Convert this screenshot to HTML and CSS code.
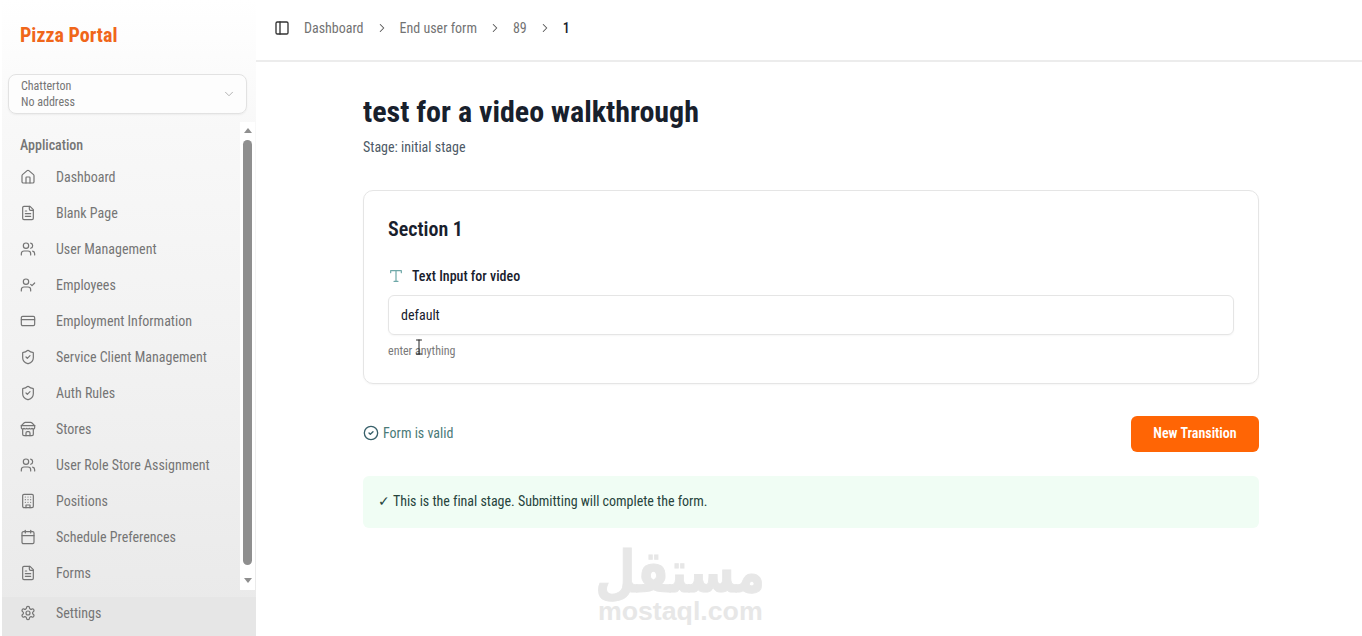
FILE: index.html
```html
<!DOCTYPE html>
<html lang="en">
<head>
  <meta charset="UTF-8" />
  <meta name="viewport" content="width=device-width, initial-scale=1.0" />
  <title>Pizza Portal</title>
  <link rel="stylesheet" href="styles.css">
</head>
<body>
  <svg class="sprites" width="0" height="0" aria-hidden="true">
    <symbol id="i-house" viewBox="0 0 24 24"><path d="M15 21v-8a1 1 0 0 0-1-1h-4a1 1 0 0 0-1 1v8"/><path d="M3 10a2 2 0 0 1 .709-1.528l7-5.999a2 2 0 0 1 2.582 0l7 5.999A2 2 0 0 1 21 10v9a2 2 0 0 1-2 2H5a2 2 0 0 1-2-2z"/></symbol>
    <symbol id="i-file" viewBox="0 0 24 24"><path d="M15 2H6a2 2 0 0 0-2 2v16a2 2 0 0 0 2 2h12a2 2 0 0 0 2-2V7Z"/><path d="M14 2v4a2 2 0 0 0 2 2h4"/><path d="M10 9H8"/><path d="M16 13H8"/><path d="M16 17H8"/></symbol>
    <symbol id="i-users" viewBox="0 0 24 24"><path d="M16 21v-2a4 4 0 0 0-4-4H6a4 4 0 0 0-4 4v2"/><circle cx="9" cy="7" r="4"/><path d="M22 21v-2a4 4 0 0 0-3-3.87"/><path d="M16 3.13a4 4 0 0 1 0 7.75"/></symbol>
    <symbol id="i-user-check" viewBox="0 0 24 24"><path d="M16 21v-2a4 4 0 0 0-4-4H6a4 4 0 0 0-4 4v2"/><circle cx="9" cy="7" r="4"/><path d="m16 11 2 2 4-4"/></symbol>
    <symbol id="i-card" viewBox="0 0 24 24"><rect x="2" y="5" width="20" height="14" rx="2"/><path d="M2 10h20"/></symbol>
    <symbol id="i-shield" viewBox="0 0 24 24"><path d="M20 13c0 5-3.5 7.500-7.660 8.950a1 1 0 0 1-.670-.010C7.500 20.500 4 18 4 13V6a1 1 0 0 1 1-1c2 0 4.500-1.200 6.240-2.720a1.170 1.170 0 0 1 1.520 0C14.510 3.810 17 5 19 5a1 1 0 0 1 1 1z"/><path d="m9 12 2 2 4-4"/></symbol>
    <symbol id="i-store" viewBox="0 0 24 24"><path d="m2 7 4.410-4.410A2 2 0 0 1 7.830 2h8.340a2 2 0 0 1 1.420.590L22 7"/><path d="M4 12v8a2 2 0 0 0 2 2h12a2 2 0 0 0 2-2v-8"/><path d="M15 22v-4a2 2 0 0 0-2-2h-2a2 2 0 0 0-2 2v4"/><path d="M2 7h20"/><path d="M22 7v3a2 2 0 0 1-2 2a2.700 2.700 0 0 1-1.590-.630.700.700 0 0 0-.820 0A2.700 2.700 0 0 1 16 12a2.700 2.700 0 0 1-1.590-.630.700.700 0 0 0-.820 0A2.700 2.700 0 0 1 12 12a2.700 2.700 0 0 1-1.590-.630.700.700 0 0 0-.820 0A2.700 2.700 0 0 1 8 12a2.700 2.700 0 0 1-1.590-.630.700.700 0 0 0-.820 0A2.700 2.700 0 0 1 4 12a2 2 0 0 1-2-2V7"/></symbol>
    <symbol id="i-building" viewBox="0 0 24 24"><rect x="4" y="2" width="16" height="20" rx="2"/><path d="M9 22v-4h6v4"/><path d="M8 6h.01M16 6h.01M12 6h.01M12 10h.01M12 14h.01M16 10h.01M16 14h.01M8 10h.01M8 14h.01"/></symbol>
    <symbol id="i-calendar" viewBox="0 0 24 24"><path d="M8 2v4"/><path d="M16 2v4"/><rect x="3" y="4" width="18" height="18" rx="2"/><path d="M3 10h18"/></symbol>
    <symbol id="i-settings" viewBox="0 0 24 24"><path d="M12.220 2h-.440a2 2 0 0 0-2 2v.180a2 2 0 0 1-1 1.730l-.430.250a2 2 0 0 1-2 0l-.150-.080a2 2 0 0 0-2.730.730l-.220.380a2 2 0 0 0 .730 2.730l.150.100a2 2 0 0 1 1 1.720v.510a2 2 0 0 1-1 1.740l-.150.090a2 2 0 0 0-.730 2.730l.220.380a2 2 0 0 0 2.730.730l.150-.080a2 2 0 0 1 2 0l.430.250a2 2 0 0 1 1 1.730V20a2 2 0 0 0 2 2h.440a2 2 0 0 0 2-2v-.180a2 2 0 0 1 1-1.730l.430-.250a2 2 0 0 1 2 0l.150.080a2 2 0 0 0 2.730-.730l.220-.390a2 2 0 0 0-.730-2.730l-.150-.080a2 2 0 0 1-1-1.740v-.500a2 2 0 0 1 1-1.740l.150-.090a2 2 0 0 0 .730-2.730l-.220-.380a2 2 0 0 0-2.730-.730l-.150.080a2 2 0 0 1-2 0l-.430-.250a2 2 0 0 1-1-1.730V4a2 2 0 0 0-2-2z"/><circle cx="12" cy="12" r="3"/></symbol>
  </svg>

  <div class="app">
    <aside class="sidebar">
      <div class="brand">Pizza Portal</div>
      <div class="store-select">
        <div class="store-text">
          <div>Chatterton</div>
          <div>No address</div>
        </div>
        <svg class="store-chevron" viewBox="0 0 24 24"><path d="m6 9 6 6 6-6"/></svg>
      </div>
      <div class="nav-wrap">
        <nav class="nav">
          <div class="nav-label">Application</div>
          <a class="nav-item"><svg class="icon"><use href="#i-house"/></svg><span>Dashboard</span></a>
          <a class="nav-item"><svg class="icon"><use href="#i-file"/></svg><span>Blank Page</span></a>
          <a class="nav-item"><svg class="icon"><use href="#i-users"/></svg><span>User Management</span></a>
          <a class="nav-item"><svg class="icon"><use href="#i-user-check"/></svg><span>Employees</span></a>
          <a class="nav-item"><svg class="icon"><use href="#i-card"/></svg><span>Employment Information</span></a>
          <a class="nav-item"><svg class="icon"><use href="#i-shield"/></svg><span>Service Client Management</span></a>
          <a class="nav-item"><svg class="icon"><use href="#i-shield"/></svg><span>Auth Rules</span></a>
          <a class="nav-item"><svg class="icon"><use href="#i-store"/></svg><span>Stores</span></a>
          <a class="nav-item"><svg class="icon"><use href="#i-users"/></svg><span>User Role Store Assignment</span></a>
          <a class="nav-item"><svg class="icon"><use href="#i-building"/></svg><span>Positions</span></a>
          <a class="nav-item"><svg class="icon"><use href="#i-calendar"/></svg><span>Schedule Preferences</span></a>
          <a class="nav-item"><svg class="icon"><use href="#i-file"/></svg><span>Forms</span></a>
        </nav>
        <div class="scrollbar">
          <div class="arrow-up"></div>
          <div class="thumb"></div>
          <div class="arrow-down"></div>
        </div>
      </div>
      <div class="side-footer">
        <a class="nav-item"><svg class="icon"><use href="#i-settings"/></svg><span>Settings</span></a>
      </div>
    </aside>

    <main class="main">
      <header class="topbar">
        <svg class="icon panel-icon" viewBox="0 0 24 24"><rect x="3" y="3" width="18" height="18" rx="2"/><path d="M9 3v18"/></svg>
        <span class="crumb">Dashboard</span>
        <svg class="crumb-sep" viewBox="0 0 24 24"><path d="m9 18 6-6-6-6"/></svg>
        <span class="crumb">End user form</span>
        <svg class="crumb-sep" viewBox="0 0 24 24"><path d="m9 18 6-6-6-6"/></svg>
        <span class="crumb">89</span>
        <svg class="crumb-sep" viewBox="0 0 24 24"><path d="m9 18 6-6-6-6"/></svg>
        <span class="crumb current">1</span>
      </header>

      <div class="content">
        <h1>test for a video walkthrough</h1>
        <p class="stage">Stage: initial stage</p>

        <section class="card">
          <h2>Section 1</h2>
          <div class="field-label">
            <svg class="t-icon" viewBox="0 0 24 24"><path d="M4 7V4h16v3"/><path d="M9 20h6"/><path d="M12 4v16"/></svg>
            <span>Text Input for video</span>
          </div>
          <div class="input">default</div>
          <div class="hint">enter anything
            <svg class="cursor" viewBox="0 0 8 16"><path d="M1.500 1h5M4 1v14M1.500 15h5"/></svg>
          </div>
        </section>

        <div class="actions">
          <div class="valid">
            <svg class="valid-icon" viewBox="0 0 24 24"><circle cx="12" cy="12" r="10"/><path d="m9 12 2 2 4-4"/></svg>
            <span>Form is valid</span>
          </div>
          <button class="btn">New Transition</button>
        </div>

        <div class="notice">✓ This is the final stage. Submitting will complete the form.</div>
      </div>

      <div class="watermark">
        <div class="wm-ar" lang="ar" dir="rtl">مستقل</div>
        <div class="wm-en">mostaql.com</div>
      </div>
    </main>
  </div>
</body>
</html>
```

FILE: styles.css
```css
* {
  box-sizing: border-box;
}
html, body {
  height: 100%;
}
body {
  margin: 0;
  overflow: hidden;
  background: #fff;
  color: #18202c;
  font-family: Roboto, "Liberation Sans", sans-serif;
  font-size: 14px;
  font-stretch: 85%;
}
.sprites {
  position: absolute;
}
svg {
  fill: none;
  stroke: currentColor;
  stroke-width: 2;
  stroke-linecap: round;
  stroke-linejoin: round;
}
.app {
  display: flex;
  height: 636px;
}

/* sidebar */
.sidebar {
  width: 254px;
  flex-shrink: 0;
  display: flex;
  flex-direction: column;
  margin-left: 2px;
  background: linear-gradient(#fff 0, #f8f8f8 130px, #f2f2f2 350px, #e9e9e9 636px);
  color: #757575;
}
.brand {
  flex-shrink: 0;
  height: 74px;
  padding: 22px 0 0 18px;
  color: #f0661a;
  font-size: 20px;
  font-weight: 700;
  line-height: 26px;
}
.store-select {
  flex-shrink: 0;
  display: flex;
  align-items: center;
  justify-content: space-between;
  height: 40px;
  margin: 0 9px 0 6px;
  padding: 0 10px 0 12px;
  background: rgba(255, 255, 255, 0.6);
  border: 1px solid #e2e2e2;
  border-radius: 8px;
  box-shadow: 0 1px 2px rgba(0, 0, 0, 0.05);
  font-size: 12px;
  line-height: 16px;
}
.store-chevron {
  width: 14px;
  height: 14px;
  color: #a8a8a8;
  stroke-width: 1.500;
}
.nav-wrap {
  flex-shrink: 0;
  display: flex;
  height: 468px;
  margin-top: 8px;
}
.nav {
  flex: 1;
  padding: 13px 0 0 18px;
}
.nav-label {
  height: 20px;
  margin-bottom: 4px;
  font-size: 14px;
  font-weight: 500;
  line-height: 20px;
}
.nav-item {
  display: flex;
  align-items: center;
  gap: 20px;
  height: 36px;
  font-size: 14px;
}
.icon {
  width: 16px;
  height: 16px;
  flex-shrink: 0;
  stroke-width: 1.800;
}
.scrollbar {
  display: flex;
  flex-direction: column;
  align-items: center;
  width: 15px;
  margin-right: 1px;
  background: #fff;
}
.thumb {
  width: 9px;
  height: 425px;
  margin: 7px 0 13px;
  background: #8f8f8f;
  border-radius: 5px;
}
.arrow-up, .arrow-down {
  width: 0;
  height: 0;
  border-left: 4.500px solid transparent;
  border-right: 4.500px solid transparent;
}
.arrow-up {
  margin-top: 6px;
  border-bottom: 5px solid #8f8f8f;
}
.arrow-down {
  border-top: 5px solid #8f8f8f;
}
.side-footer {
  flex: 1;
  min-height: 0;
  display: flex;
  align-items: center;
  margin-top: 7px;
  padding: 0 0 8px 18px;
  background: #e6e6e6;
}

/* main */
.main {
  flex: 1;
  position: relative;
  min-width: 0;
}
.topbar {
  display: flex;
  align-items: center;
  height: 62px;
  padding: 0 0 4px 18px;
  border-bottom: 2px solid #ececec;
}
.panel-icon {
  margin-right: 14px;
  color: #333;
  stroke-width: 2;
}
.crumb {
  color: #737373;
}
.crumb.current {
  color: #18202c;
  font-weight: 500;
}
.crumb-sep {
  width: 14px;
  height: 14px;
  margin: 0 11px;
  color: #555;
  stroke-width: 1.800;
}
.content {
  width: 896px;
  margin-left: 107px;
  padding-top: 30px;
}
h1 {
  margin: 0;
  font-size: 30px;
  font-weight: 700;
  line-height: 40px;
}
.stage {
  margin: 5px 0 0;
  color: #4d5a66;
  line-height: 20px;
}
.card {
  height: 194px;
  margin-top: 33px;
  padding: 24px;
  border: 1px solid #e5e5e5;
  border-radius: 10px;
  box-shadow: 0 1px 2px rgba(0, 0, 0, 0.04);
}
h2 {
  margin: 0;
  font-size: 20px;
  font-weight: 600;
  line-height: 28px;
}
.field-label {
  display: flex;
  align-items: center;
  gap: 8px;
  margin-top: 23px;
  font-weight: 500;
  line-height: 20px;
}
.t-icon {
  width: 16px;
  height: 16px;
  color: #6fa8a8;
  stroke-width: 1.800;
}
.input {
  height: 40px;
  margin-top: 9px;
  padding: 0 12px;
  border: 1px solid #e5e5e5;
  border-radius: 6px;
  box-shadow: 0 1px 2px rgba(0, 0, 0, 0.04);
  line-height: 38px;
}
.hint {
  position: relative;
  margin-top: 8px;
  color: #7a7a7a;
  font-size: 12px;
  line-height: 16px;
}
.cursor {
  position: absolute;
  left: 27px;
  top: -4px;
  width: 8px;
  height: 16px;
  color: #222;
  stroke-width: 1;
}
.actions {
  display: flex;
  align-items: center;
  justify-content: space-between;
  margin-top: 32px;
}
.valid {
  display: flex;
  align-items: center;
  gap: 4px;
  padding-bottom: 2px;
  color: #4a7a78;
}
.valid-icon {
  width: 16px;
  height: 16px;
  color: #38606a;
  stroke-width: 2;
}
.btn {
  width: 128px;
  height: 36px;
  padding: 0 0 2px;
  border: none;
  border-radius: 6px;
  background: #ff6505;
  color: #fff;
  font: inherit;
  font-weight: 600;
}
.notice {
  height: 52px;
  margin-top: 24px;
  padding: 0 15px;
  background: #f0fdf4;
  border-radius: 6px;
  color: #27443c;
  letter-spacing: -0.02px;
  line-height: 50px;
}
.watermark {
  position: absolute;
  left: 342px;
  top: 543px;
  width: 164px;
  color: #e7e7e7;
  text-align: center;
  font-family: "DejaVu Sans", sans-serif;
  font-stretch: normal;
  font-weight: 700;
}
.wm-ar {
  height: 54px;
  margin-right: -3px;
  font-size: 58px;
  line-height: 58px;
  white-space: nowrap;
  -webkit-text-stroke: 1px #e7e7e7;
  transform: scaleX(0.8);
  transform-origin: right center;
}
.wm-en {
  font-family: "Liberation Sans", sans-serif;
  font-size: 26.700px;
  line-height: 28px;
}
```
